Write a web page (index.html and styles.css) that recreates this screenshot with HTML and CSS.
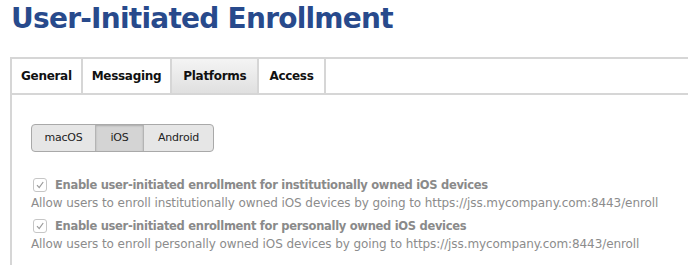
FILE: index.html
```html
<!DOCTYPE html>
<html lang="en">
<head>
    <meta charset="UTF-8">
    <title>User-Initiated Enrollment</title>
    <link rel="stylesheet" href="styles.css">
</head>
<body>
    <h1 class="page-title">User-Initiated Enrollment</h1>

    <div class="tab-bar">
        <div class="tab">General</div>
        <div class="tab">Messaging</div>
        <div class="tab active">Platforms</div>
        <div class="tab">Access</div>
    </div>

    <div class="panel">
        <div class="segmented">
            <div class="segment">macOS</div>
            <div class="segment selected">iOS</div>
            <div class="segment">Android</div>
        </div>

        <div class="option">
            <label class="option-label">
                <span class="checkbox">
                    <svg width="10" height="10" viewBox="0 0 10 10"><path d="M2 5.2 L4.2 7.6 L8.2 2" fill="none" stroke="#9a9a9a" stroke-width="1.2"/></svg>
                </span>
                Enable user-initiated enrollment for institutionally owned iOS devices
            </label>
            <p class="option-help">Allow users to enroll institutionally owned iOS devices by going to https://jss.mycompany.com:8443/enroll</p>
        </div>

        <div class="option">
            <label class="option-label">
                <span class="checkbox">
                    <svg width="10" height="10" viewBox="0 0 10 10"><path d="M2 5.2 L4.2 7.6 L8.2 2" fill="none" stroke="#9a9a9a" stroke-width="1.2"/></svg>
                </span>
                Enable user-initiated enrollment for personally owned iOS devices
            </label>
            <p class="option-help">Allow users to enroll personally owned iOS devices by going to https://jss.mycompany.com:8443/enroll</p>
        </div>
    </div>
</body>
</html>
```

FILE: styles.css
```css
body {
    font-family: 'DejaVu Sans', Verdana, sans-serif;
    background-color: #ffffff;
    margin: 0;
    padding: 0;
}

.page-title {
    color: #284a8c;
    font-size: 28px;
    letter-spacing: -0.75px;
    font-weight: bold;
    margin: 0;
    padding: 2px 0 0 11px;
    height: 55px;
    line-height: 34px;
}

.tab-bar {
    display: flex;
    margin-left: 10px;
    border-top: 2px solid #d6d6d6;
    border-bottom: 2px solid #d6d6d6;
    border-left: 2px solid #d6d6d6;
    height: 34px;
}

.tab {
    padding: 0 9px;
    font-size: 12px;
    letter-spacing: -0.3px;
    font-weight: bold;
    color: #111;
    line-height: 34px;
    border-right: 2px solid #d6d6d6;
}

.tab.active {
    padding: 0 11px;
    background: linear-gradient(#f4f4f4, #e0e0e0);
}

.tab:last-child {
    padding: 0 10px;
}

.panel {
    margin-left: 10px;
    border-left: 2px solid #d6d6d6;
    padding: 29px 0 14px 19px;
}

.segmented {
    display: inline-flex;
    border: 1px solid #a9a9a9;
    border-radius: 4px;
    background: #e6e6e6;
    overflow: hidden;
    margin-bottom: 26px;
}

.segment {
    font-size: 11px;
    letter-spacing: -0.2px;
    color: #222;
    height: 26px;
    line-height: 26px;
    text-align: center;
    border-left: 1px solid #b4b4b4;
}

.segment:first-child {
    border-left: none;
    width: 63px;
}

.segment.selected {
    width: 47px;
    background: #d4d4d4;
    box-shadow: inset 0 1px 2px rgba(0, 0, 0, 0.2);
}

.segment:last-child {
    width: 69px;
}

.option {
    margin-bottom: 9px;
}

.option:last-child {
    margin-bottom: 0;
}

.option-label {
    display: flex;
    align-items: center;
    font-size: 11.5px;
    letter-spacing: -0.3px;
    font-weight: bold;
    color: #8a8a8a;
    padding-left: 2px;
}

.checkbox {
    display: inline-flex;
    align-items: center;
    justify-content: center;
    width: 12px;
    height: 12px;
    border: 1px solid #c6c6c6;
    border-radius: 3px;
    margin-right: 8px;
}

.option-help {
    margin: 4px 0 0;
    font-size: 12px;
    letter-spacing: -0.09px;
    color: #8c8c8c;
}
```
